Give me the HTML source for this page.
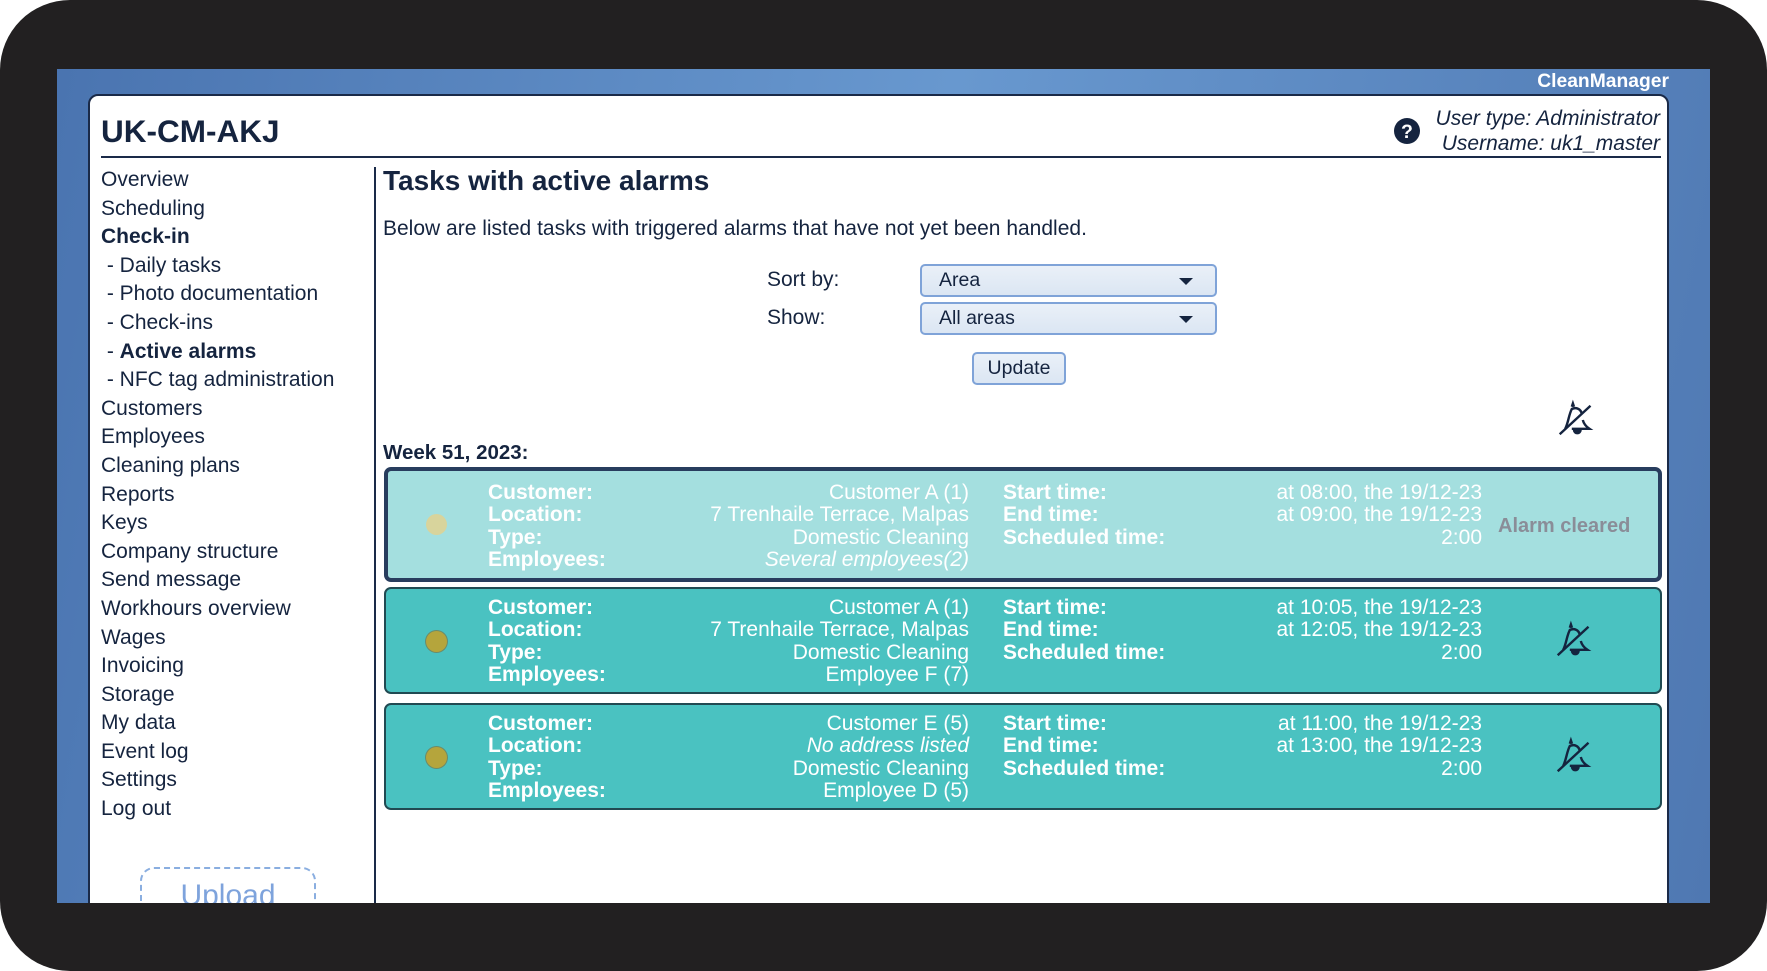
<!DOCTYPE html>
<html><head><style>
*{margin:0;padding:0;box-sizing:border-box}
body{width:1767px;height:971px;background:#fff;position:relative;overflow:hidden;font-family:"Liberation Sans",sans-serif;color:#15243f}
.frame{position:absolute;left:0;top:0;width:1767px;height:971px;background:#222021;border-radius:70px}
.blue{position:absolute;left:57px;top:69px;width:1653px;height:834px;background:linear-gradient(100deg,#4a74b0 0%,#6898cf 50%,#4f78b2 100%);overflow:hidden}
.cm{position:absolute;right:41px;top:2px;color:#fff;font-weight:bold;font-size:19.3px}
.panel{position:absolute;left:31px;top:25px;width:1581px;height:900px;background:#fff;border:2px solid #1a2a48;border-radius:10px}
.abs{position:absolute}
.side{position:absolute;left:11px;top:70px;font-size:21px;line-height:28.6px}
.side div{white-space:nowrap}
.sel{position:absolute;width:297px;height:33px;border:2px solid #7fa3d8;border-radius:5px;background:linear-gradient(#eaf0f8,#dbe6f3);font-size:19.5px;padding-left:17px;line-height:29px}
.sel:after{content:"";position:absolute;right:22px;top:12px;border-left:7px solid transparent;border-right:7px solid transparent;border-top:7px solid #15243f}
.card{position:absolute;left:294px;width:1278px;border-radius:7px;color:#fff;font-size:21px;line-height:22.3px}
.card .l{position:absolute;left:102px;font-weight:bold}
.card .v{position:absolute;text-align:right;width:420px;left:163px;white-space:nowrap}
.card .l2{position:absolute;left:617px;font-weight:bold}
.card .v2{position:absolute;width:320px;left:776px;text-align:right;white-space:nowrap}
.dot{position:absolute;left:40px;width:21px;height:21px;border-radius:50%}
</style></head><body>
<div class="frame"></div>
<div class="blue">
 <div class="cm">CleanManager</div>
 <div class="panel">
  <div class="abs" style="left:11px;top:17px;font-size:31.5px;font-weight:bold">UK-CM-AKJ</div>
  <div class="abs" style="left:11px;top:60px;width:1560px;height:2px;background:#1a2a48"></div>
  <div class="abs" style="right:7px;top:10px;font-size:21px;font-style:italic;text-align:right;line-height:25px">User type: Administrator<br>Username: uk1_master</div>
  <svg class="abs" style="left:1304px;top:22px" width="26" height="26" viewBox="0 0 24 24"><circle cx="12" cy="12" r="12" fill="#15243f"/><text x="12" y="18.5" text-anchor="middle" font-family="Liberation Sans" font-weight="bold" font-size="18" fill="#fff">?</text></svg>
  <div class="abs" style="left:284px;top:71px;width:2px;height:840px;background:#1a2a48"></div>
  <div class="side">
   <div>Overview</div><div>Scheduling</div><div style="font-weight:bold">Check-in</div>
   <div>&nbsp;- Daily tasks</div><div>&nbsp;- Photo documentation</div><div>&nbsp;- Check-ins</div>
   <div>&nbsp;- <b>Active alarms</b></div><div>&nbsp;- NFC tag administration</div>
   <div>Customers</div><div>Employees</div><div>Cleaning plans</div><div>Reports</div><div>Keys</div><div>Company structure</div><div>Send message</div><div>Workhours overview</div><div>Wages</div><div>Invoicing</div><div>Storage</div><div>My data</div><div>Event log</div><div>Settings</div><div>Log out</div>
  </div>
  <div class="abs" style="left:50px;top:771px;width:176px;height:70px;border:2px dashed #8aaee0;border-radius:14px;color:#7ea3dc;font-size:30px;text-align:center;padding-top:10px">Upload</div>
  <div class="abs" style="left:293px;top:69px;font-size:28px;font-weight:bold">Tasks with active alarms</div>
  <div class="abs" style="left:293px;top:121px;font-size:21px">Below are listed tasks with triggered alarms that have not yet been handled.</div>
  <div class="abs" style="left:677px;top:172px;font-size:21px">Sort by:</div>
  <div class="abs" style="left:677px;top:210px;font-size:21px">Show:</div>
  <div class="sel" style="left:830px;top:168px">Area</div>
  <div class="sel" style="left:830px;top:206px">All areas</div>
  <div class="abs" style="left:882px;top:256px;width:94px;height:33px;border:2px solid #7fa3d8;border-radius:5px;background:linear-gradient(#eaf0f8,#dbe6f3);font-size:19.5px;text-align:center;line-height:29px">Update</div>
  <svg class="abs" style="left:1462px;top:302px" width="44" height="44" viewBox="0 0 40 40" fill="none" stroke="#15243f" stroke-width="2.2"><path d="M7 33 L35 7"/><path d="M18 8 l1-3 1 3 M12 28 C15 22 15 16 18 10 C22 8 26 10 27 14 M28 20 C29 24 31 26 34 28 L18 28"/><path d="M20 29 a3 3 0 0 0 6 0" fill="#15243f"/></svg>
  <div class="abs" style="left:293px;top:345px;font-size:20.5px;font-weight:bold">Week 51, 2023:</div>

  <div class="card" style="top:371px;height:115px;background:#a4dfdf;border:4px solid #283d5e">
   <div class="dot" style="background:#d8d49c;top:43px;left:38px"></div>
   <div class="l" style="top:11px;left:100px">Customer:<br>Location:<br>Type:<br>Employees:</div>
   <div class="v" style="top:11px;left:161px">Customer A (1)<br>7 Trenhaile Terrace, Malpas<br>Domestic Cleaning<br><i>Several employees(2)</i></div>
   <div class="l2" style="top:11px;left:615px">Start time:<br>End time:<br>Scheduled time:</div>
   <div class="v2" style="top:11px;left:774px">at 08:00, the 19/12-23<br>at 09:00, the 19/12-23<br>2:00</div>
   <div class="abs" style="left:1110px;top:44px;font-weight:bold;color:#8a8d98;font-size:20px">Alarm cleared</div>
  </div>

  <div class="card" style="top:491px;height:107px;background:#4ac2c1;border:2px solid #214a52">
   <div class="dot" style="background:#b5a53c;top:42px;box-shadow:0 0 0 1px #6b8b6a"></div>
   <div class="l" style="top:8px">Customer:<br>Location:<br>Type:<br>Employees:</div>
   <div class="v" style="top:8px">Customer A (1)<br>7 Trenhaile Terrace, Malpas<br>Domestic Cleaning<br>Employee F (7)</div>
   <div class="l2" style="top:8px">Start time:<br>End time:<br>Scheduled time:</div>
   <div class="v2" style="top:8px">at 10:05, the 19/12-23<br>at 12:05, the 19/12-23<br>2:00</div>
   <svg class="abs" style="left:1164px;top:30px" width="44" height="44" viewBox="0 0 40 40" fill="none" stroke="#15243f" stroke-width="2.2"><path d="M7 33 L35 7"/><path d="M18 8 l1-3 1 3 M12 28 C15 22 15 16 18 10 C22 8 26 10 27 14 M28 20 C29 24 31 26 34 28 L18 28"/><path d="M20 29 a3 3 0 0 0 6 0" fill="#15243f"/></svg>
  </div>

  <div class="card" style="top:607px;height:107px;background:#4ac2c1;border:2px solid #214a52">
   <div class="dot" style="background:#b5a53c;top:42px;box-shadow:0 0 0 1px #6b8b6a"></div>
   <div class="l" style="top:8px">Customer:<br>Location:<br>Type:<br>Employees:</div>
   <div class="v" style="top:8px">Customer E (5)<br><i>No address listed</i><br>Domestic Cleaning<br>Employee D (5)</div>
   <div class="l2" style="top:8px">Start time:<br>End time:<br>Scheduled time:</div>
   <div class="v2" style="top:8px">at 11:00, the 19/12-23<br>at 13:00, the 19/12-23<br>2:00</div>
   <svg class="abs" style="left:1164px;top:30px" width="44" height="44" viewBox="0 0 40 40" fill="none" stroke="#15243f" stroke-width="2.2"><path d="M7 33 L35 7"/><path d="M18 8 l1-3 1 3 M12 28 C15 22 15 16 18 10 C22 8 26 10 27 14 M28 20 C29 24 31 26 34 28 L18 28"/><path d="M20 29 a3 3 0 0 0 6 0" fill="#15243f"/></svg>
  </div>
 </div>
</div>
</body></html>
